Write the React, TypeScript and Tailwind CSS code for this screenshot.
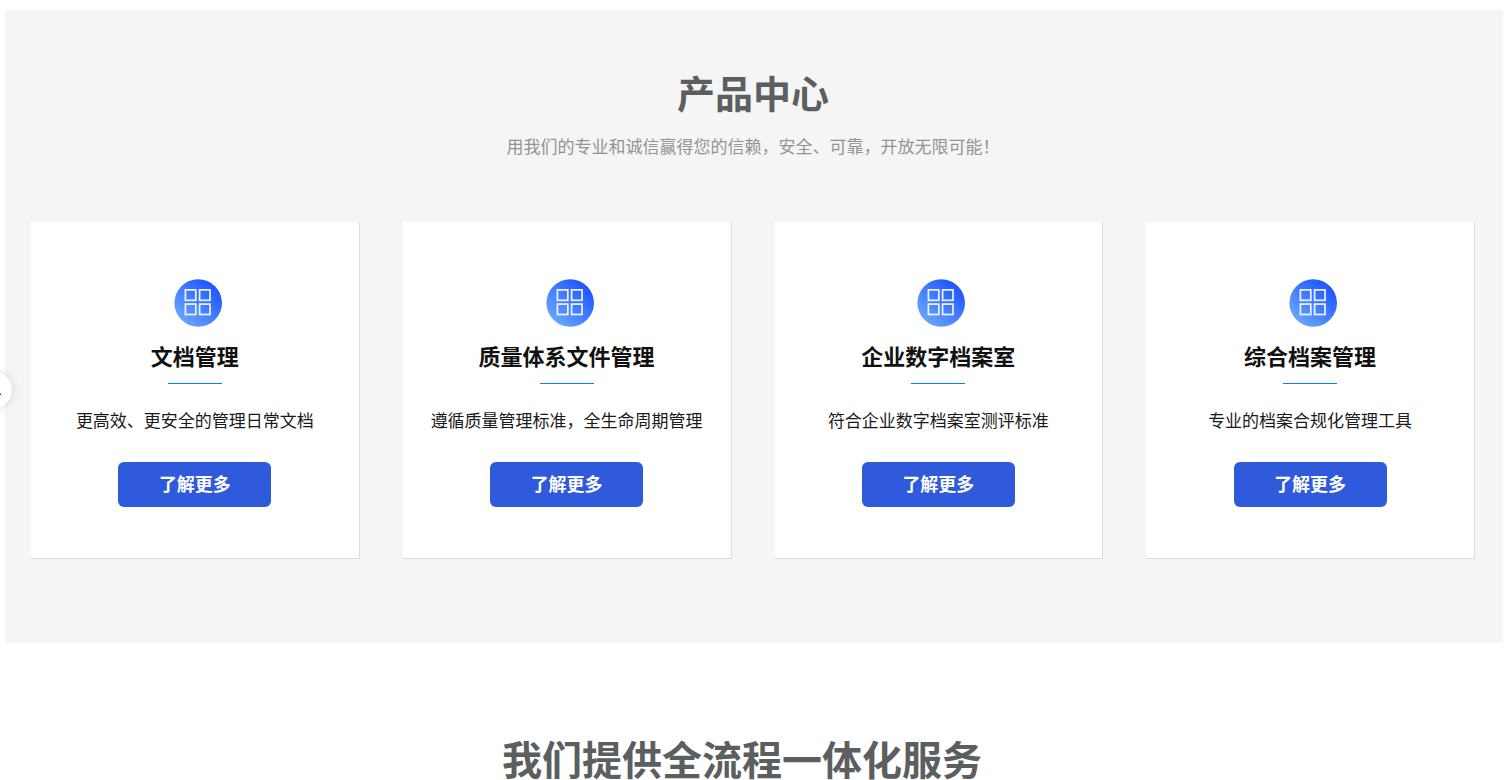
import React from "react";

type Product = { title: string; description: string };

const products: Product[] = [
  { title: "文档管理", description: "更高效、更安全的管理日常文档" },
  { title: "质量体系文件管理", description: "遵循质量管理标准，全生命周期管理" },
  { title: "企业数字档案室", description: "符合企业数字档案室测评标准" },
  { title: "综合档案管理", description: "专业的档案合规化管理工具" },
];

function GridIcon() {
  return (
    <svg className="ml-1.5 h-12 w-12 shrink-0" viewBox="0 0 48 48" fill="none" aria-hidden="true">
      <defs>
        <linearGradient id="badge" x1="8" y1="42" x2="38" y2="8" gradientUnits="userSpaceOnUse">
          <stop offset="0" stopColor="#67a5ff" />
          <stop offset="1" stopColor="#2359ff" />
        </linearGradient>
      </defs>
      <circle cx="24.2" cy="24" r="23.8" fill="url(#badge)" />
      <g stroke="#eef4ff" strokeWidth="1.7">
        <rect x="11.4" y="10.9" width="10.4" height="10.4" />
        <rect x="25.6" y="10.9" width="10.4" height="10.4" />
        <rect x="11.4" y="25.1" width="10.4" height="10.4" />
        <rect x="25.6" y="25.1" width="10.4" height="10.4" />
      </g>
    </svg>
  );
}

function ProductCard({ title, description }: Product) {
  return (
    <article className="flex flex-col items-center border-r border-b border-[#dcdcdc] bg-white pt-[57px] pb-[51px]">
      <GridIcon />
      <h3 className="mt-2.5 text-[22px] leading-9 font-bold text-[#111111]">{title}</h3>
      <span className="mt-2.5 h-px w-[54px] bg-[#0a7aff]" />
      <p className="mt-[23px] text-center text-[17px] leading-[26px] text-[#1a1a1a]">{description}</p>
      <button
        type="button"
        className="mt-[29px] h-[45px] w-[153px] rounded-md bg-[#2f5adc] pb-[3px] text-[18px] leading-6 font-bold text-white"
      >
        了解更多
      </button>
    </article>
  );
}

export default function App() {
  return (
    <main className="relative overflow-hidden bg-white pt-2.5 font-['Noto_Sans_CJK_SC',sans-serif]">
      <section className="mr-px ml-[5px] bg-[#f5f5f5] pt-[58px] pr-7 pb-[84px] pl-[26px]">
        <header className="text-center">
          <h2 className="text-[38px] leading-[48px] font-bold text-[#5b5f5f]">产品中心</h2>
          <p className="mt-4 text-[17px] leading-7 text-[#929494]">
            用我们的专业和诚信赢得您的信赖，安全、可靠，开放无限可能！
          </p>
        </header>
        <div className="mt-[62px] grid grid-cols-4 gap-[43px]">
          {products.map((product) => (
            <ProductCard key={product.title} {...product} />
          ))}
        </div>
      </section>
      <section className="pt-[93px] pr-5">
        <h2 className="text-center text-[40px] leading-[44px] font-bold text-[#5b5f5f]">
          我们提供全流程一体化服务
        </h2>
      </section>
      <button
        type="button"
        aria-label="上一页"
        className="absolute top-[372px] -left-6 flex h-9 w-9 items-center justify-center rounded-full bg-white shadow-[0_0_10px_rgba(0,0,0,0.15)]"
      >
        <svg className="h-4 w-4" viewBox="0 0 16 16" fill="none" stroke="#444" strokeWidth="1.5" aria-hidden="true">
          <path d="M2 5 L8 12.3 H15" />
        </svg>
      </button>
    </main>
  );
}
